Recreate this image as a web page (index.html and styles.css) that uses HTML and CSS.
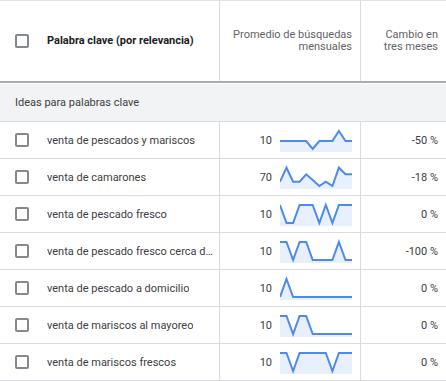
FILE: index.html
```html
<!DOCTYPE html>
<html lang="es">
<head>
    <meta charset="UTF-8">
    <meta name="viewport" content="width=device-width, initial-scale=1.0">
    <title>Ideas para palabras clave</title>
    <link rel="stylesheet" href="styles.css">
</head>
<body>
    <div class="kw-table">
        <div class="row head">
            <div class="cell kw"><span class="check"></span><span class="label">Palabra clave (por relevancia)</span></div>
            <div class="cell avg">Promedio de búsquedas<br>mensuales</div>
            <div class="cell change">Cambio en<br>tres meses</div>
        </div>

        <div class="group">Ideas para palabras clave</div>

        <div class="row">
            <div class="cell kw"><span class="check"></span><span class="label">venta de pescados y mariscos</span></div>
            <div class="cell avg">
                <span class="num">10</span>
                <svg class="spark" width="72" height="24" viewBox="0 0 72 24">
                    <polygon class="area" points="0,13 6.5,13 13.1,13 19.6,13 26.2,13 32.7,21 39.3,13 45.8,13 52.4,13 58.9,3 65.5,13 72,13 72,24 0,24"/>
                    <polyline class="line" points="0,13 6.5,13 13.1,13 19.6,13 26.2,13 32.7,21 39.3,13 45.8,13 52.4,13 58.9,3 65.5,13 72,13"/>
                </svg>
            </div>
            <div class="cell change">-50 %</div>
        </div>

        <div class="row">
            <div class="cell kw"><span class="check"></span><span class="label">venta de camarones</span></div>
            <div class="cell avg">
                <span class="num">70</span>
                <svg class="spark" width="72" height="24" viewBox="0 0 72 24">
                    <polygon class="area" points="0,16.7 6.5,2.7 13.1,16.7 19.6,16.7 26.2,9.3 32.7,15 39.3,21 45.8,16.7 52.4,21 58.9,2.7 65.5,9.3 72,9.3 72,24 0,24"/>
                    <polyline class="line" points="0,16.7 6.5,2.7 13.1,16.7 19.6,16.7 26.2,9.3 32.7,15 39.3,21 45.8,16.7 52.4,21 58.9,2.7 65.5,9.3 72,9.3"/>
                </svg>
            </div>
            <div class="cell change">-18 %</div>
        </div>

        <div class="row">
            <div class="cell kw"><span class="check"></span><span class="label">venta de pescado fresco</span></div>
            <div class="cell avg">
                <span class="num">10</span>
                <svg class="spark" width="72" height="24" viewBox="0 0 72 24">
                    <polygon class="area" points="0,3 6.5,21 13.1,21 19.6,3 26.2,3 32.7,3 39.3,21 45.8,3 52.4,21 58.9,3 65.5,3 72,3 72,24 0,24"/>
                    <polyline class="line" points="0,3 6.5,21 13.1,21 19.6,3 26.2,3 32.7,3 39.3,21 45.8,3 52.4,21 58.9,3 65.5,3 72,3"/>
                </svg>
            </div>
            <div class="cell change">0 %</div>
        </div>

        <div class="row">
            <div class="cell kw"><span class="check"></span><span class="label">venta de pescado fresco cerca de mí</span></div>
            <div class="cell avg">
                <span class="num">10</span>
                <svg class="spark" width="72" height="24" viewBox="0 0 72 24">
                    <polygon class="area" points="0,3 6.5,3 13.1,21 19.6,3 26.2,3 32.7,21 39.3,21 45.8,21 52.4,21 58.9,3 65.5,21 72,21 72,24 0,24"/>
                    <polyline class="line" points="0,3 6.5,3 13.1,21 19.6,3 26.2,3 32.7,21 39.3,21 45.8,21 52.4,21 58.9,3 65.5,21 72,21"/>
                </svg>
            </div>
            <div class="cell change">-100 %</div>
        </div>

        <div class="row">
            <div class="cell kw"><span class="check"></span><span class="label">venta de pescado a domicilio</span></div>
            <div class="cell avg">
                <span class="num">10</span>
                <svg class="spark" width="72" height="24" viewBox="0 0 72 24">
                    <polygon class="area" points="0,21 6.5,3 13.1,21 19.6,21 26.2,21 32.7,21 39.3,21 45.8,21 52.4,21 58.9,21 65.5,21 72,21 72,24 0,24"/>
                    <polyline class="line" points="0,21 6.5,3 13.1,21 19.6,21 26.2,21 32.7,21 39.3,21 45.8,21 52.4,21 58.9,21 65.5,21 72,21"/>
                </svg>
            </div>
            <div class="cell change">0 %</div>
        </div>

        <div class="row">
            <div class="cell kw"><span class="check"></span><span class="label">venta de mariscos al mayoreo</span></div>
            <div class="cell avg">
                <span class="num">10</span>
                <svg class="spark" width="72" height="24" viewBox="0 0 72 24">
                    <polygon class="area" points="0,3 6.5,3 13.1,21 19.6,3 26.2,3 32.7,21 39.3,21 45.8,21 52.4,21 58.9,21 65.5,21 72,21 72,24 0,24"/>
                    <polyline class="line" points="0,3 6.5,3 13.1,21 19.6,3 26.2,3 32.7,21 39.3,21 45.8,21 52.4,21 58.9,21 65.5,21 72,21"/>
                </svg>
            </div>
            <div class="cell change">0 %</div>
        </div>

        <div class="row">
            <div class="cell kw"><span class="check"></span><span class="label">venta de mariscos frescos</span></div>
            <div class="cell avg">
                <span class="num">10</span>
                <svg class="spark" width="72" height="24" viewBox="0 0 72 24">
                    <polygon class="area" points="0,3 6.5,3 13.1,21 19.6,3 26.2,3 32.7,3 39.3,3 45.8,3 52.4,21 58.9,3 65.5,3 72,3 72,24 0,24"/>
                    <polyline class="line" points="0,3 6.5,3 13.1,21 19.6,3 26.2,3 32.7,3 39.3,3 45.8,3 52.4,21 58.9,3 65.5,3 72,3"/>
                </svg>
            </div>
            <div class="cell change">0 %</div>
        </div>
    </div>
</body>
</html>
```

FILE: styles.css
```css
body {
    margin: 0;
    font-family: Roboto, "Noto Sans", sans-serif;
    font-size: 11px;
    color: #3c4043;
    background-color: #ffffff;
}
.kw-table {
    border-top: 1px solid #e3e3e3;
}
.row {
    display: grid;
    grid-template-columns: 220px 141px 1fr;
    height: 37px;
    box-sizing: border-box;
    border-bottom: 1px solid #dadce0;
}
.row.head {
    height: 82px;
    border-bottom: 2px solid #a9acb0;
    line-height: 12px;
    color: #5f6368;
}
.cell {
    display: flex;
    align-items: center;
    min-width: 0;
    padding: 0 8px;
    border-right: 1px solid #dadce0;
}
.cell.kw {
    padding-left: 15px;
    padding-right: 4px;
}
.cell.avg,
.cell.change {
    justify-content: flex-end;
    text-align: right;
}
.cell.change {
    border-right: none;
}
.check {
    flex: none;
    width: 14px;
    height: 14px;
    box-sizing: border-box;
    border: 2px solid #85888c;
    border-radius: 2px;
    margin-right: 18px;
}
.label {
    overflow: hidden;
    white-space: nowrap;
    text-overflow: ellipsis;
}
.head .label {
    font-weight: bold;
    color: #202124;
}
.group {
    margin-top: 1px;
    height: 38px;
    box-sizing: border-box;
    padding-left: 15px;
    display: flex;
    align-items: center;
    background-color: #f1f3f4;
    border-bottom: 1px solid #dadce0;
}
.num {
    margin-right: 8px;
}
.spark {
    display: block;
    flex: none;
}
.spark .area {
    fill: #e8f0fe;
}
.spark .line {
    fill: none;
    stroke: #4d8af0;
    stroke-width: 2;
}
```
